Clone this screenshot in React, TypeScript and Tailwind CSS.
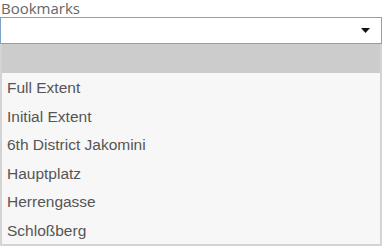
import React from "react";

const bookmarks = [
  "Full Extent",
  "Initial Extent",
  "6th District Jakomini",
  "Hauptplatz",
  "Herrengasse",
  "Schloßberg",
];

export default function App() {
  return (
    <div className="relative h-[247px] w-[383px] overflow-hidden bg-white">
      <div className="w-[382px]">
        <div className="h-[17px] pl-[1px] text-[15px] leading-[17px] text-[#666666] [font-family:'Open_Sans',sans-serif]">
          Bookmarks
        </div>

        <div className="flex h-[27px] items-center justify-end border border-[#7da2ce] bg-white pr-[11px]">
          <svg width="9" height="5" viewBox="0 0 9 5">
            <polygon points="0,0 9,0 4.5,5" fill="#111111" />
          </svg>
        </div>

        <ul className="border-x-2 border-b-2 border-l-[#d4d4d4] border-r-[#d4d4d4] border-b-[#d4d4d4] bg-[#f7f7f7] text-[15.5px] text-[#555555] [font-family:'Liberation_Sans',Arial,sans-serif]">
          <li className="h-[29px] bg-[#cccccc]" />
          {bookmarks.map((name) => (
            <li key={name} className="flex h-[28.5px] items-center pl-[5px] pt-[1px]">
              {name}
            </li>
          ))}
        </ul>
      </div>
    </div>
  );
}
